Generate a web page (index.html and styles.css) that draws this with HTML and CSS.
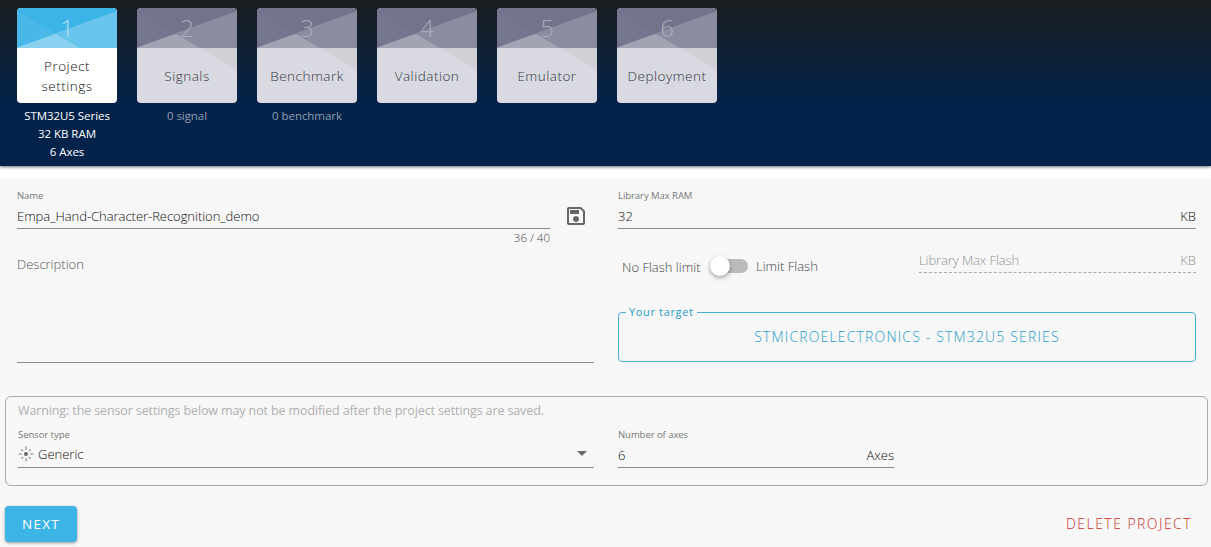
FILE: index.html
```html
<!DOCTYPE html>
<html lang="en">
<head>
<meta charset="utf-8">
<title>Project settings</title>
<link rel="stylesheet" href="styles.css">
</head>
<body>
<svg class="defs" width="0" height="0" aria-hidden="true">
  <symbol id="facets-active" viewBox="0 0 100 95">
    <rect width="100" height="95" fill="#fff"/>
    <rect width="100" height="40" fill="#3cb4e7"/>
    <path d="M0 3V39L39 25.500Z" fill="#49b8e8"/>
    <path d="M39 25L100 3V40H63Z" fill="#68c4ed"/>
    <path d="M0 39.500L39 25.500L63 40H0Z" fill="#88d1f1"/>
  </symbol>
  <symbol id="facets" viewBox="0 0 100 95">
    <rect width="100" height="95" fill="#d9dae1"/>
    <rect width="100" height="40" fill="#71748b"/>
    <path d="M0 3V39L39 25.500Z" fill="#74778d"/>
    <path d="M39 25L100 3V40H63Z" fill="#8b8c9f"/>
    <path d="M0 39.500L39 25.500L63 40H0Z" fill="#a3a4b3"/>
    <path d="M63 40H100V62Z" fill="#d0d0d7"/>
  </symbol>
</svg>
<header class="header">
  <div class="step active">
    <div class="card"><svg class="facets"><use href="#facets-active"/></svg><div class="face"><span class="num">1</span><span class="label">Project<br>settings</span></div></div>
    <div class="caption">STM32U5 Series<br>32 KB RAM<br>6 Axes</div>
  </div>
  <div class="step">
    <div class="card"><svg class="facets"><use href="#facets"/></svg><div class="face"><span class="num">2</span><span class="label">Signals</span></div></div>
    <div class="caption">0 signal</div>
  </div>
  <div class="step">
    <div class="card"><svg class="facets"><use href="#facets"/></svg><div class="face"><span class="num">3</span><span class="label">Benchmark</span></div></div>
    <div class="caption">0 benchmark</div>
  </div>
  <div class="step">
    <div class="card"><svg class="facets"><use href="#facets"/></svg><div class="face"><span class="num">4</span><span class="label">Validation</span></div></div>
  </div>
  <div class="step">
    <div class="card"><svg class="facets"><use href="#facets"/></svg><div class="face"><span class="num">5</span><span class="label">Emulator</span></div></div>
  </div>
  <div class="step">
    <div class="card"><svg class="facets"><use href="#facets"/></svg><div class="face"><span class="num">6</span><span class="label">Deployment</span></div></div>
  </div>
</header>
<main class="main">
  <div class="columns">
    <section class="left">
      <div class="name-row">
        <div class="field name">
          <div class="small-label">Name</div>
          <div class="value"><span class="project-name">Empa_Hand-Character-Recognition_demo</span></div>
          <div class="counter">36 / 40</div>
        </div>
        <svg class="save" viewBox="0 0 24 24"><path fill="#666" d="M17 3H5c-1.110 0-2 .9-2 2v14c0 1.100.89 2 2 2h14c1.100 0 2-.9 2-2V7l-4-4zm2 16H5V5h11.170L19 7.830V19zm-7-7c-1.660 0-3 1.340-3 3s1.340 3 3 3 3-1.340 3-3-1.340-3-3-3zM6 6h9v4H6z"/></svg>
      </div>
      <div class="description">Description</div>
    </section>
    <section class="right">
      <div class="field">
        <div class="small-label">Library Max RAM</div>
        <div class="value"><span>32</span><span class="unit">KB</span></div>
      </div>
      <div class="flash">
        <span class="no-limit">No Flash limit</span>
        <span class="toggle"><span class="knob"></span></span>
        <span class="limit">Limit Flash</span>
        <div class="max-flash"><span>Library Max Flash</span><span class="unit">KB</span></div>
      </div>
      <fieldset class="target"><legend>Your target</legend>STMICROELECTRONICS - STM32U5 SERIES</fieldset>
    </section>
  </div>
  <section class="sensor">
    <p class="warning">Warning: the sensor settings below may not be modified after the project settings are saved.</p>
    <div class="sensor-fields">
      <div class="field">
        <div class="small-label">Sensor type</div>
        <div class="value select">
          <svg class="burst" viewBox="0 0 16 16"><circle cx="8" cy="8" r="2" fill="#666"/><path stroke="#888" stroke-width="1.200" fill="none" d="M8 .5V4M8 12v3.500M.5 8H4M12 8h3.500M3.300 3.300l1.700 1.700M11 11l1.700 1.700M3.300 12.700l1.700-1.700M11 5l1.700-1.700"/></svg>
          <span>Generic</span>
          <svg class="arrow" viewBox="0 0 10 5"><path d="M0 0H10L5 5Z" fill="#6b6b6b"/></svg>
        </div>
      </div>
      <div class="field">
        <div class="small-label">Number of axes</div>
        <div class="value"><span>6</span><span class="unit">Axes</span></div>
      </div>
    </div>
  </section>
  <footer class="actions">
    <button class="next">NEXT</button>
    <button class="delete">DELETE PROJECT</button>
  </footer>
</main>
</body>
</html>
```

FILE: styles.css
```css
* { box-sizing: border-box; }
body {
  margin: 0;
  width: 1211px;
  height: 547px;
  overflow: hidden;
  background: #fff;
  color: #111;
  font: 300 13px/20px "Open Sans", "Noto Sans", sans-serif;
}
.defs { display: block; height: 0; }

.header {
  display: flex;
  gap: 20px;
  height: 166px;
  padding: 8px 17px;
  background: linear-gradient(#1a1d20 0, #03234b 65%);
  box-shadow: 0 1px 3px rgba(0, 0, 0, .6);
}
.step { width: 100px; color: #8f9db2; }
.card { display: grid; height: 95px; border-radius: 4px; overflow: hidden; }
.facets, .face { grid-area: 1 / 1; width: 100px; height: 95px; }
.face { display: grid; grid-template-rows: 40px 55px; place-items: center; text-align: center; z-index: 1; }
.num { font-size: 24px; line-height: 40px; color: #aaabba; }
.active .num { color: #b0e0f5; }
.label { color: #33353f; font-size: 13.500px; letter-spacing: .5px; }
.active .label { color: #111; }
.caption {
  margin-top: 4px;
  font-size: 11.500px;
  font-weight: 400;
  line-height: 18px;
  letter-spacing: -.05px;
  text-align: center;
  white-space: nowrap;
}
.active .caption { color: #fff; font-weight: 500; }

.main { margin-top: 12px; height: 369px; padding-top: 10px; background: #f7f7f7; }
.columns { display: grid; grid-template-columns: 577px 578px; column-gap: 24px; padding-left: 17px; height: 208px; }
.small-label { font-size: 9.500px; line-height: 16px; height: 14px; font-weight: 400; letter-spacing: -.05px; color: #777; }
.value {
  display: flex;
  height: 27px;
  line-height: 28px;
  border-bottom: 1px solid #8b8b8b;
  white-space: nowrap;
}
.project-name { letter-spacing: -.04px; }
.unit { margin-left: auto; }
.name-row { display: flex; height: 62px; }
.name { width: 533px; }
.counter { text-align: right; font-size: 11.500px; line-height: 18px; color: #444; }
.save { width: 24px; height: 24px; margin: 16px 0 0 14px; }
.description { height: 113px; padding-top: 4px; color: #555; border-bottom: 1px solid #8b8b8b; }
.flash { display: flex; height: 44px; white-space: nowrap; color: #444; }
.no-limit { width: 92px; padding: 28px 0 0 4px; }
.toggle { width: 38px; height: 14px; margin-top: 30px; border-radius: 7px; background: #bbb; }
.knob {
  display: block;
  width: 20px;
  height: 20px;
  margin-top: -3px;
  border-radius: 50%;
  background: #fff;
  box-shadow: 0 2px 4px rgba(0, 0, 0, .35);
}
.limit { padding: 27px 0 0 8px; width: 171px; }
.max-flash {
  display: flex;
  flex: 1;
  height: 23px;
  margin-top: 21px;
  line-height: 20px;
  color: #909090;
  border-bottom: 1px dashed #aaa;
}
.max-flash span:first-child { letter-spacing: -.1px; }
.target {
  height: 57px;
  margin: 32px 0 0;
  padding: 4px 0 0;
  border: 1px solid #45b0d2;
  border-radius: 4px;
  color: #1e9dca;
  font-size: 14px;
  line-height: 28px;
  letter-spacing: 1.160px;
  text-align: center;
}
.target legend {
  margin-left: 7px;
  margin-right: auto;
  padding: 0 3px;
  font-size: 11px;
  font-weight: 400;
  line-height: 14px;
  letter-spacing: .65px;
  text-align: left;
}

.sensor { height: 90px; width: 1203px; margin-left: 5px; padding: 4px 12px; border: 1px solid #aaa; border-radius: 6px; }
.warning { margin: 0; line-height: 20px; color: #b0b0b0; font-weight: 400; font-size: 12.500px; letter-spacing: -.12px; }
.sensor-fields { display: grid; grid-template-columns: 576px 276px; column-gap: 24px; padding-top: 6px; }
.select { line-height: 26px; }
.burst { width: 16px; height: 16px; margin: 5px 4px 0 0; }
.arrow { width: 10px; height: 5px; margin: 10px 7px 0 auto; }

.actions { display: flex; justify-content: space-between; padding: 20px 19px 0 5px; }
button {
  height: 36px;
  padding: 0;
  border: 0;
  background: none;
  font: 300 14px/36px "Open Sans", "Noto Sans", sans-serif;
  letter-spacing: 1.450px;
}
.next { width: 72px; border-radius: 4px; color: #fff; background: #3cb4e6; font-size: 13.500px; font-weight: 400; letter-spacing: 1.250px; box-shadow: 0 1px 3px rgba(0, 0, 0, .4); }
.delete { color: #cf2f28; }
```
